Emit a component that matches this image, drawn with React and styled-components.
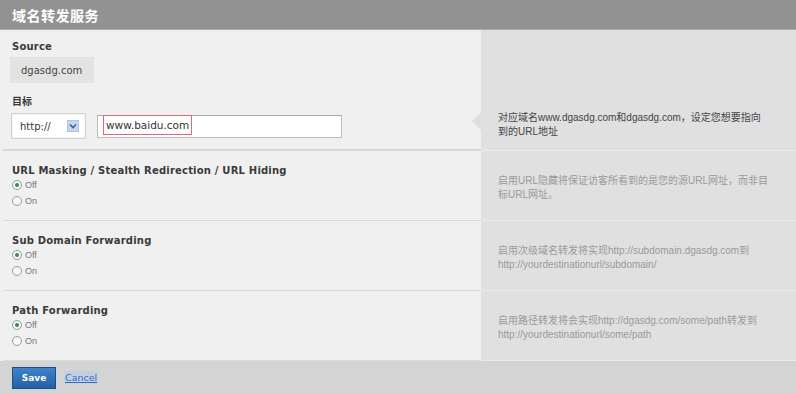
import React from "react";
import styled, { createGlobalStyle } from "styled-components";

const GlobalStyle = createGlobalStyle`
  html, body { margin: 0; padding: 0; background: #f0f0f0; }
  body { font-family: "DejaVu Sans", "Noto Sans CJK SC", sans-serif; }
  * { box-sizing: border-box; }
`;

const Page = styled.div`
  width: 796px;
  height: 393px;
  display: flex;
  flex-direction: column;
  background: #f0f0f0;
  overflow: hidden;
`;

const Header = styled.div`
  height: 30px;
  flex: none;
  background: #929292;
  display: flex;
  align-items: center;
  padding-left: 12px;
  border-bottom: 1px solid #a9a9a9;
`;

const Title = styled.h1`
  margin: 0;
  font: bold 14px "Noto Sans CJK SC", "DejaVu Sans", sans-serif;
  color: #ffffff;
  letter-spacing: 0.5px;
`;

const Section = styled.div`
  display: grid;
  grid-template-columns: 481px 1fr;
  height: ${(p) => p.$h}px;
  flex: none;
`;

const Main = styled.div`
  padding: ${(p) => (p.$first ? "11px 0 0 9px" : "14px 0 0 9px")};
  border-bottom: ${(p) => (p.$first ? "2px solid #d6d6d6" : "1px solid #dadada")};
  margin-left: 3px;
  display: flex;
  flex-direction: column;
`;

const Aside = styled.div`
  position: relative;
  background: #e0e0e0;
  display: flex;
  align-items: ${(p) => (p.$end ? "flex-end" : "center")};
  padding: ${(p) => (p.$end ? "0 0 11px 17px" : "4px 0 0 17px")};
  border-bottom: 1px solid #ebebeb;

  ${(p) =>
    p.$notch &&
    `
    &::before {
      content: "";
      position: absolute;
      left: -9px;
      top: 82px;
      border-top: 9px solid transparent;
      border-bottom: 9px solid transparent;
      border-right: 9px solid #dedede;
    }
  `}
`;

const Help = styled.p`
  margin: 0;
  font: 10px/14px "Liberation Sans", "Noto Sans CJK SC", sans-serif;
  color: ${(p) => (p.$dark ? "#444" : "#9a9a9a")};
  white-space: nowrap;
`;

const Label = styled.div`
  font: bold 10px/12px "DejaVu Sans", "Noto Sans CJK SC", sans-serif;
  letter-spacing: ${(p) => (p.$cjk ? "0" : "0.2px")};
  color: #3a3a3a;
  margin-top: ${(p) => p.$mt || 0}px;
`;

const SourceBox = styled.div`
  margin: 4px 0 0 -2px;
  width: 84px;
  height: 26px;
  background: #e3e3e3;
  display: flex;
  align-items: center;
  padding-left: 11px;
  font: 10px "DejaVu Sans", sans-serif;
  color: #444;
`;

const TargetRow = styled.div`
  margin-top: 5px;
  display: flex;
  align-items: center;
  gap: 11px;
`;

const Select = styled.div`
  width: 75px;
  height: 26px;
  margin-left: -1px;
  background: #fff;
  border: 1px solid #d2d2d2;
  box-shadow: inset 0 0 0 1px #f4f4f4;
  display: flex;
  align-items: center;
  justify-content: space-between;
  padding: 0 6px 0 8px;
  font: 10px "DejaVu Sans", sans-serif;
  color: #333;
`;

const Arrow = styled.span`
  width: 12px;
  height: 12px;
  background: #c6d6ef;
  border: 1px solid #b0c3e4;
  display: flex;
  align-items: center;
  justify-content: center;
`;

const InputBox = styled.div`
  width: 245px;
  height: 23px;
  background: #fff;
  border: 1px solid #bdbdbd;
  border-top-color: #a8a8a8;
  display: flex;
  align-items: flex-start;
  padding-left: 5px;
`;

const Highlight = styled.span`
  height: 20px;
  margin-top: -1px;
  border: 1px solid #db6b78;
  padding: 0 2px;
  display: flex;
  align-items: center;
  font: 10.5px "DejaVu Sans", sans-serif;
  color: #333;
`;

const Radios = styled.div`
  display: flex;
  flex-direction: column;
`;

const RadioRow = styled.label`
  display: flex;
  align-items: center;
  gap: 3px;
  height: 16px;
  font: 9px "Liberation Sans", sans-serif;
  color: #777;
`;

const Circle = styled.span`
  width: 10px;
  height: 10px;
  border-radius: 50%;
  border: 1px solid ${(p) => (p.$on ? "#7fa98c" : "#9a9a9a")};
  background: #f7f7f7;
  display: flex;
  align-items: center;
  justify-content: center;

  &::after {
    content: "";
    width: 4px;
    height: 4px;
    border-radius: 50%;
    background: ${(p) => (p.$on ? "#4f7d5e" : "transparent")};
  }
`;

const Footer = styled.div`
  flex: 1;
  background: #d4d4d4;
  display: flex;
  align-items: center;
  padding: 1px 0 0 12px;
  gap: 8px;
`;

const SaveButton = styled.button`
  width: 44px;
  height: 22px;
  border: 1px solid #1d4f86;
  background: linear-gradient(#3f83c8, #2361a6);
  color: #fff;
  font: bold 9px "DejaVu Sans", sans-serif;
  padding: 0;
`;

const CancelLink = styled.a`
  font: 9.5px "DejaVu Sans", sans-serif;
  color: #3c6bbd;
  text-decoration: underline;
  background: #c3d0e4;
  padding: 1px 1px;
`;

const Radio = ({ on, children }) => (
  <RadioRow>
    <Circle $on={on} />
    {children}
  </RadioRow>
);

const OptionSection = ({ title, lines }) => (
  <Section $h={70}>
    <Main>
      <Label>{title}</Label>
      <Radios>
        <Radio on>Off</Radio>
        <Radio>On</Radio>
      </Radios>
    </Main>
    <Aside>
      <Help>
        {lines[0]}
        <br />
        {lines[1]}
      </Help>
    </Aside>
  </Section>
);

export default function App() {
  return (
    <>
      <GlobalStyle />
      <Page>
        <Header>
          <Title>域名转发服务</Title>
        </Header>
        <Section $h={121}>
          <Main $first>
            <Label>Source</Label>
            <SourceBox>dgasdg.com</SourceBox>
            <Label $cjk $mt={13}>目标</Label>
            <TargetRow>
              <Select>
                http://
                <Arrow>
                  <svg width="8" height="6" viewBox="0 0 8 6">
                    <path d="M1 1.5 L4 4.5 L7 1.5" fill="none" stroke="#3b5f9c" strokeWidth="1.6" />
                  </svg>
                </Arrow>
              </Select>
              <InputBox>
                <Highlight>www.baidu.com</Highlight>
              </InputBox>
            </TargetRow>
          </Main>
          <Aside $end $notch>
            <Help $dark>
              对应域名www.dgasdg.com和dgasdg.com，设定您想要指向
              <br />
              到的URL地址
            </Help>
          </Aside>
        </Section>
        <OptionSection
          title="URL Masking / Stealth Redirection / URL Hiding"
          lines={["启用URL隐藏将保证访客所看到的是您的源URL网址，而非目", "标URL网址。"]}
        />
        <OptionSection
          title="Sub Domain Forwarding"
          lines={["启用次级域名转发将实现http://subdomain.dgasdg.com到", "http://yourdestinationurl/subdomain/"]}
        />
        <OptionSection
          title="Path Forwarding"
          lines={["启用路径转发将会实现http://dgasdg.com/some/path转发到", "http://yourdestinationurl/some/path"]}
        />
        <Footer>
          <SaveButton>Save</SaveButton>
          <CancelLink href="#">Cancel</CancelLink>
        </Footer>
      </Page>
    </>
  );
}
